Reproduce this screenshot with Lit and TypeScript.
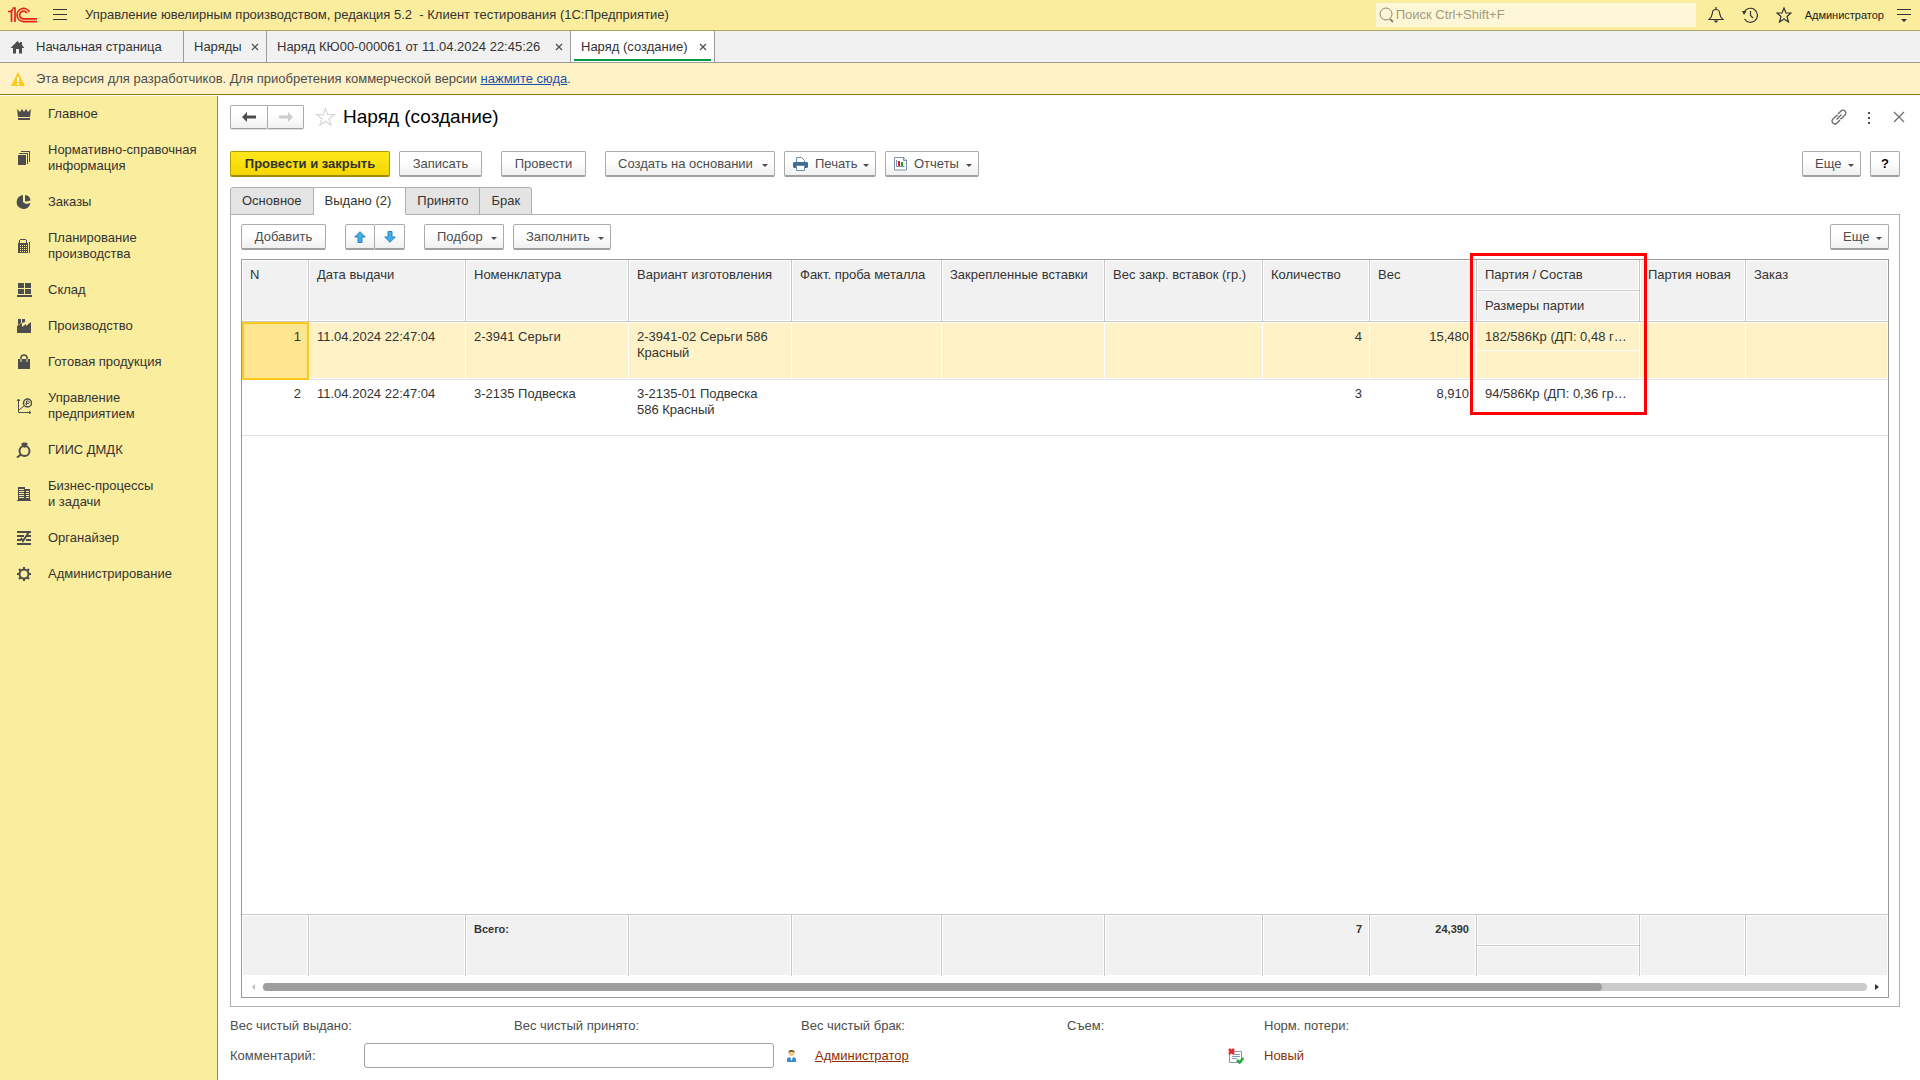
import { LitElement, html, css, svg, nothing } from "lit";
import { customElement } from "lit/decorators.js";
import { classMap } from "lit/directives/class-map.js";

const dark = "#4d4d4d";

/* 16px section icons */
const sectionIcons: Record<string, unknown> = {
  crown: svg`<path fill=${dark} d="M1 3l3 3 2-3 2 3 2-3 2 3 3-3-1 8H2zM2 12h12v2H2z"/>`,
  books: svg`<path shape-rendering="crispEdges" fill=${dark} d="M2 5h8v10H2zM3 3h9v11h-1V4H3zM5 1h9v11h-1V2H5z"/>`,
  pie: svg`<path fill=${dark} d="M7 1v7l3 2 4.500-1A7 7 0 1 1 7 1zM9 1a6 6 0 0 1 5.500 5.500l-4.500 1L9 7z"/>`,
  calc: svg`<g shape-rendering="crispEdges"><path fill=${dark} d="M4 1h6v1h1v3h1v10H2V5h1V2h1zM13 4h1v11h-1z"/><path fill="#fbed9e" d="M4 2h6v3H4zM4 7h1v1H4zM6 7h1v1H6zM8 7h1v1H8zM10 7h1v1h-1zM4 9h1v1H4zM6 9h1v1H6zM8 9h1v1H8zM10 9h1v1h-1zM4 11h1v1H4zM6 11h1v1H6zM8 11h1v1H8zM10 11h1v1h-1zM4 13h1v1H4zM6 13h1v1H6zM8 13h1v1H8zM10 13h1v1h-1z"/></g>`,
  boxes: svg`<path shape-rendering="crispEdges" fill=${dark} d="M2 1h6v5H2zM9 1h6v5H9zM2 7h6v5H2zM9 7h6v5H9zM1 13h15v2H1z"/>`,
  factory: svg`<path fill=${dark} d="M2 1h3v4L2 7zM6 1h3v3L6 5zM1 8l5-3v4l4-3v2l5-4v11H1z"/>`,
  bag: svg`<path fill=${dark} d="M2 5h12v10H2z"/><path fill="none" stroke=${dark} stroke-width="1.500" d="M5 5V4a3 3 0 0 1 6 0v1"/><path fill="none" stroke="#fbed9e" d="M5 5v3M11 5v3"/>`,
  chart: svg`<path fill="none" stroke=${dark} d="M2.500 1v13.500H15M1 3l1.500-2L4 3M13 13l2 1.500-2 1.500M3 12l5-4"/><circle cx="11.500" cy="5" r="4" fill="none" stroke=${dark} stroke-width="1.500"/><path fill="none" stroke=${dark} d="M10.500 7.500V3H12a1 1 0 0 1 0 2.500H9.500"/>`,
  ring: svg`<circle cx="8.500" cy="9" r="5" fill="none" stroke=${dark} stroke-width="2"/><path fill=${dark} d="M5.500 1.500l1.500-1h3l1.500 1V3l-3 3-3-3z"/><path stroke=${dark} stroke-width="2" d="M5 12.500l-4 3"/>`,
  building: svg`<g shape-rendering="crispEdges"><path fill=${dark} d="M2 1h7v2h5v11h1v1H1v-1h1z"/><path fill="#fbed9e" d="M3 3h5v1H3zM3 5h5v1H3zM3 7h5v1H3zM3 9h5v1H3zM3 11h5v1H3zM10 5h3v1h-3zM10 7h3v1h-3zM10 9h3v1h-3zM10 11h3v1h-3z"/></g>`,
  list: svg`<path fill=${dark} d="M1 1h14v2H1zM1 5h7v2H1zM11 5h4v2h-4zM1 9h4v2H1zM10 9h5v2h-5zM1 13h14v2H1z"/><path fill="none" stroke=${dark} stroke-width="2" d="M5 8l2 3 6-9"/>`,
  gear: svg`<circle cx="8" cy="8" r="4.500" fill="none" stroke=${dark} stroke-width="2"/><path stroke=${dark} stroke-width="2" d="M8 1v3M8 12v3M1 8h3M12 8h3M3 3l2 2M11 11l2 2M3 13l2-2M11 5l2-2"/>`,
};

const sections: [string, string[]][] = [
  ["crown", ["Главное"]],
  ["books", ["Нормативно-справочная", "информация"]],
  ["pie", ["Заказы"]],
  ["calc", ["Планирование", "производства"]],
  ["boxes", ["Склад"]],
  ["factory", ["Производство"]],
  ["bag", ["Готовая продукция"]],
  ["chart", ["Управление", "предприятием"]],
  ["ring", ["ГИИС ДМДК"]],
  ["building", ["Бизнес-процессы", "и задачи"]],
  ["list", ["Органайзер"]],
  ["gear", ["Администрирование"]],
];

interface Column {
  title: string;
  width?: number;
  sub?: string;
  num?: boolean;
  total?: string;
}

const columns: Column[] = [
  { title: "N", width: 67, num: true },
  { title: "Дата выдачи", width: 157 },
  { title: "Номенклатура", width: 163, total: "Всего:" },
  { title: "Вариант изготовления", width: 163 },
  { title: "Факт. проба металла", width: 150 },
  { title: "Закрепленные вставки", width: 163 },
  { title: "Вес закр. вставок (гр.)", width: 158 },
  { title: "Количество", width: 107, num: true, total: "7" },
  { title: "Вес", width: 107, num: true, total: "24,390" },
  { title: "Партия / Состав", width: 163, sub: "Размеры партии" },
  { title: "Партия новая", width: 106 },
  { title: "Заказ" },
];

const rows: string[][] = [
  ["1", "11.04.2024 22:47:04", "2-3941 Серьги", "2-3941-02 Серьги 586 Красный", "", "", "", "4", "15,480", "182/586Кр (ДП: 0,48 г…", "", ""],
  ["2", "11.04.2024 22:47:04", "3-2135 Подвеска", "3-2135-01 Подвеска 586 Красный", "", "", "", "3", "8,910", "94/586Кр (ДП: 0,36 гр…", "", ""],
];

const caret = html`<svg class="caret" width="6" height="3" viewBox="0 0 6 3"><path fill="#4d4d4d" d="M0 0h6L3 3z"/></svg>`;
const cross = html`<svg width="8" height="8" viewBox="0 0 8 8"><path stroke="#4d4d4d" stroke-width="1.200" d="M1 1l6 6M7 1L1 7"/></svg>`;

@customElement("app-root")
export class AppRoot extends LitElement {
  static styles = css`
    :host {
      display: flex;
      flex-direction: column;
      min-height: 100vh;
      background: #fff;
      color: #333;
      font: 13px/16px "Liberation Sans", Arial, sans-serif;
    }
    * { box-sizing: border-box; }
    svg { display: block; flex: none; }
    button { font: inherit; color: inherit; margin: 0; cursor: pointer; }
    .plain { border: 0; background: none; padding: 0; display: flex; }

    .top {
      display: flex;
      align-items: center;
      height: 31px;
      padding: 0 9px 0 8px;
      background: #fbed9e;
      border-bottom: 1px solid #aca268;
    }
    .menu { margin: 0 17px 0 16px; }
    .appname { flex: 1; white-space: pre; }
    .search {
      display: flex;
      align-items: center;
      gap: 2px;
      width: 320px;
      height: 24px;
      padding-left: 3px;
      border-radius: 2px;
      background: #fef7d7;
    }
    .search input {
      flex: 1;
      min-width: 0;
      border: 0;
      padding: 0;
      outline: 0;
      background: none;
      font: inherit;
    }
    .search input::placeholder { color: #a09b82; opacity: 1; }
    .topicons { display: flex; gap: 18px; margin: 0 13px 0 12px; }
    .user { font-size: 11px; margin-right: 13px; color: #222; }

    .windows {
      display: flex;
      height: 32px;
      background: #f1f1f1;
      border-bottom: 1px solid #9b9b9b;
    }
    .win {
      display: flex;
      align-items: center;
      justify-content: space-between;
      padding: 0 7px 0 10px;
      border-right: 1px solid #9b9b9b;
    }
    .win.home { width: 184px; justify-content: flex-start; gap: 11px; }
    .win.list { width: 83px; }
    .win.order { width: 304px; }
    .win.on { position: relative; width: 144px; background: #fff; }
    .win.on::after {
      content: "";
      position: absolute;
      left: 3px;
      right: 3px;
      bottom: 1px;
      height: 2px;
      background: #009646;
    }
    .notice {
      display: flex;
      align-items: center;
      gap: 10px;
      height: 32px;
      padding-left: 10px;
      background: #fef2c6;
      border-bottom: 1px solid #987b1c;
      color: #4d4d4d;
    }
    .notice a { color: #1a4fad; }

    .body { flex: 1; display: flex; }
    .side {
      width: 218px;
      flex: none;
      background: #fbed9e;
      border-right: 1px solid #8f8a66;
      margin-top: 1px;
    }
    .section {
      display: flex;
      align-items: center;
      gap: 16px;
      padding: 10px 8px 10px 16px;
      color: inherit;
      text-decoration: none;
    }
    .section span { display: block; white-space: nowrap; }

    .form { flex: 1; min-width: 0; display: flex; flex-direction: column; padding: 10px 20px 12px 12px; }
    .title { display: flex; align-items: center; height: 24px; }
    .title h1 { margin: 0; flex: 1; font-size: 19px; line-height: 24px; font-weight: normal; color: #000; }
    .fav { margin: 0 7px 0 11px; }
    .wintools { display: flex; align-items: center; gap: 19px; margin-right: -7px; }

    .btn {
      display: inline-flex;
      align-items: center;
      justify-content: center;
      height: 26px;
      padding: 0 12px;
      border: 1px solid #ababab;
      border-bottom: 2px solid #a0a0a0;
      border-radius: 2px;
      background: linear-gradient(#fff 40%, #f0f0f0);
      color: #4d4d4d;
      white-space: nowrap;
    }
    .nav .btn { height: 24px; padding: 0; width: 38px; border-bottom-width: 1px; box-shadow: 0 1px 0 #ddd; }
    .nav, .pair { display: flex; }
    .nav .btn + .btn, .pair .btn + .btn { border-left: 0; border-radius: 0 2px 2px 0; }
    .nav .btn + .btn { width: 36px; }
    .pair .btn { width: 30px; padding: 0; }
    .primary {
      border-color: #b39c00;
      border-bottom-color: #a08c00;
      background: linear-gradient(#ffe81a, #f5d600);
      color: #333;
      font-weight: bold;
    }
    .drop { padding: 0 6px 0 12px; justify-content: flex-start; }
    .drop.pic { padding-left: 8px; }
    .caret { margin: 3px 0 0 auto; }
    .btn .ico { margin-right: 7px; }
    .w160 { width: 160px; }
    .w170 { width: 170px; }
    .w94 { width: 94px; }
    .w92 { width: 92px; }
    .w85 { width: 85px; }
    .w83 { width: 83px; }
    .w98 { width: 98px; }
    .w80 { width: 80px; }
    .w59 { width: 59px; }
    .w30 { width: 30px; color: #000; padding: 0; font-weight: bold; }
    .bar { display: flex; align-items: center; gap: 9px; }
    .commands { margin: 22px 0 10px; }
    .gap { margin-left: 10px; }
    .push { margin-left: auto; }

    .tabs { display: flex; position: relative; z-index: 1; }
    .tab {
      height: 28px;
      padding: 0 11px;
      border: 1px solid #b0b0b0;
      border-left-width: 0;
      background: #e4e4e4;
      color: #333;
    }
    .tab:first-child { border-left-width: 1px; border-radius: 3px 0 0 0; }
    .tab:last-child { border-radius: 0 3px 0 0; }
    .tab.on { padding-right: 14px; background: #fff; border-bottom-color: #fff; }
    .panel {
      flex: 1;
      display: flex;
      flex-direction: column;
      margin-top: -1px;
      padding: 9px 10px 8px;
      border: 1px solid #b0b0b0;
    }
    .rowcmds { margin-bottom: 9px; }

    .grid {
      flex: 1;
      display: grid;
      grid-template-rows: 1fr 21px;
      border: 1px solid #9b9b9b;
    }
    table { width: 100%; height: 100%; border-collapse: separate; border-spacing: 0; table-layout: fixed; }
    th, td { padding: 0; text-align: left; vertical-align: top; font-weight: normal; }
    .cell { padding: 6px 7px 0 8px; overflow: hidden; }
    .hrow, .frow { height: 62px; }
    .hrow th, .frow td {
      border-right: 1px solid #c8c8c8;
      background: #f1f1f1;
      box-shadow: inset 0 0 0 1px #fff;
      white-space: nowrap;
    }
    .hrow th { border-bottom: 1px solid #c8c8c8; }
    .frow td { border-top: 1px solid #c8c8c8; font-size: 11px; font-weight: bold; }
    .hrow th:last-child, .frow td:last-child { border-right: 0; }
    .hrow .cell { padding-top: 7px; }
    .hrow .cell.half, .frow .cell.half { height: 31px; border-bottom: 1px solid #c8c8c8; box-shadow: 0 1px 0 #fff, inset 0 -1px 0 #fff; }
    .num .cell { text-align: right; }
    .hrow .num .cell { text-align: left; }
    .drow { height: 56px; }
    .drow td { border-right: 1px solid transparent; border-bottom: 1px solid #e2e2e2; }
    .drow .cell { padding-right: 8px; }
    .drow .num .cell { padding-right: 7px; }
    .drow .wide { padding-right: 16px; }
    .drow .tail { white-space: nowrap; }
    .drow.sel { height: 58px; }
    .sel td {
      border-right-color: #fff;
      background: #fef2c6;
      box-shadow: inset 0 1px 0 #fff, inset 0 -1px 0 #fff;
    }
    .sel .tail { height: 29px; border-bottom: 1px solid #fff; }
    .sel .cell { padding-top: 7px; }
    .sel td:first-child { background: #fee590; outline: 2px solid #fbc91e; outline-offset: -2px; }
    .fill td { border: 0; }
    .marked { position: relative; }
    .mark {
      position: absolute;
      z-index: 2;
      left: -7px;
      right: -8px;
      top: -7px;
      height: 162px;
      border: 3px solid #f00;
      pointer-events: none;
    }
    .scroll { display: flex; align-items: center; gap: 8px; padding: 0 9px 0 10px; height: 21px; }
    .track { flex: 1; height: 8px; border-radius: 4px; background: #cbcbcb; }
    .thumb { height: 8px; width: 83.500%; border-radius: 4px; background: #9e9e9e; }

    .sums { display: grid; grid-template-columns: 284px 287px 266px 197px 1fr; margin-top: 11px; color: #4d4d4d; }
    .meta { display: grid; grid-template-columns: 134px 410px 41px 413px 36px 1fr; align-items: center; margin-top: 9px; color: #4d4d4d; }
    .meta input { height: 25px; width: 100%; border: 1px solid #a0a0a0; border-radius: 3px; padding: 0 6px; font: inherit; background: #fff; }
    .meta a { color: #8c2f00; }
    .meta .who { margin-left: 12px; }
    .meta .state { text-decoration: none; }
  `;

  render() {
    return html`
      <header class="top">
        <svg width="29" height="16" viewBox="0 0 29 16" role="img" aria-label="1С">
          <g fill="none" stroke="#e0261c" stroke-width="1.700">
            <path d="M0 4.500h2.500L5 2.500M3.500 4v11M7 15V1.200H4.500"/>
            <path d="M21.500 5A6.600 6.600 0 1 0 15.500 14.600H29"/>
            <path d="M18.800 6A3.900 3.900 0 1 0 15.500 11.900H29"/>
          </g>
        </svg>
        <button class="plain menu" aria-label="Меню">
          <svg width="15" height="12" viewBox="0 0 15 12"><path shape-rendering="crispEdges" fill="#333" d="M0 0h14v1H0zM0 5h14v1H0zM0 10h14v1H0z"/></svg>
        </button>
        <div class="appname">Управление ювелирным производством, редакция 5.2  - Клиент тестирования (1С:Предприятие)</div>
        <label class="search">
          <svg width="15" height="16" viewBox="0 0 15 16"><circle cx="7" cy="7" r="6" fill="none" stroke="#8a866d"/><path stroke="#8a866d" stroke-width="2" d="M11 12l3 3"/></svg>
          <input type="text" aria-label="Поиск" placeholder="Поиск Ctrl+Shift+F" />
        </label>
        <div class="topicons">
          <button class="plain" aria-label="Уведомления">
            <svg width="16" height="16" viewBox="0 0 16 16"><path fill="none" stroke="#333" stroke-width="1.200" d="M1 12.500h14c-3-2-3-4-3.500-7A3.500 3 0 0 0 4.500 5.500C4 8.500 4 10.500 1 12.500zM8 0v2"/><path fill="#333" d="M5.500 13.500h5L8 16z"/></svg>
          </button>
          <button class="plain" aria-label="История">
            <svg width="16" height="16" viewBox="0 0 16 16"><path fill="none" stroke="#333" stroke-width="1.200" d="M2 5.500A7 7 0 1 1 2.500 12M8.500 4v4.500L11 11"/><path fill="#333" d="M0 4l4.500 0L2 8z"/></svg>
          </button>
          <button class="plain" aria-label="Избранное">
            <svg width="16" height="16" viewBox="0 0 16 16"><path fill="none" stroke="#333" stroke-width="1.200" d="M8 1l2 5h5l-4 3.500 1.500 5.500L8 12l-4.500 3L5 9.500 1 6h5z"/></svg>
          </button>
        </div>
        <div class="user">Администратор</div>
        <button class="plain" aria-label="Сервис">
          <svg width="14" height="13" viewBox="0 0 14 13"><path fill="#333" d="M0 0h14v1H0zM0 5h14v1H0zM4 10h6l-3 3z"/></svg>
        </button>
      </header>

      <nav class="windows">
        <div class="win home">
          <svg width="15" height="14" viewBox="0 0 15 14"><path fill="#4d4d4d" d="M7.500 1L1 7.500V8h2v5.500h3V9h3v4.500h3V8h2v-.500L12 5V2h-2v1.500z"/></svg>
          Начальная страница
        </div>
        <div class="win list">Наряды <button class="plain" aria-label="Закрыть">${cross}</button></div>
        <div class="win order">Наряд КЮ00-000061 от 11.04.2024 22:45:26 <button class="plain" aria-label="Закрыть">${cross}</button></div>
        <div class="win on">Наряд (создание) <button class="plain" aria-label="Закрыть">${cross}</button></div>
      </nav>

      <div class="notice">
        <svg width="16" height="16" viewBox="0 0 16 16"><path fill="#fdca1d" d="M8 1l7 14H1z"/><path fill="#fff" d="M7 6h2v5H7zM7 12h2v2H7z"/></svg>
        <span>Эта версия для разработчиков. Для приобретения коммерческой версии <a href="#">нажмите сюда</a>.</span>
      </div>

      <div class="body">
        <nav class="side">
          ${sections.map(
            ([icon, lines]) => html`<a class="section" href="#">
              <svg width="16" height="16" viewBox="0 0 16 16">${sectionIcons[icon]}</svg>
              <div>${lines.map((l) => html`<span>${l}</span>`)}</div>
            </a>`
          )}
        </nav>

        <main class="form">
          <div class="title">
            <div class="nav">
              <button class="btn" aria-label="Назад"><svg width="14" height="10" viewBox="0 0 14 10"><path fill="#4d4d4d" d="M0 5l5-5v3.500h9v3H5V10z"/></svg></button>
              <button class="btn" aria-label="Вперед"><svg width="14" height="10" viewBox="0 0 14 10"><path fill="#ccc" d="M14 5L9 0v3.500H0v3h9V10z"/></svg></button>
            </div>
            <button class="plain fav" aria-label="В избранное">
              <svg width="21" height="20" viewBox="0 0 21 20"><path fill="none" stroke="#d9d9d9" stroke-width="1.300" d="M10.500 1.500l2.300 6.200h6.500l-5.200 4.100 1.900 6.400-5.500-3.800L5 18.200l1.900-6.400-5.200-4.100h6.500z"/></svg>
            </button>
            <h1>Наряд (создание)</h1>
            <div class="wintools">
              <button class="plain" aria-label="Ссылка">
                <svg width="16" height="16" viewBox="0 0 16 16"><g fill="none" stroke="#6b6b6b" stroke-width="1.300"><path d="M7 5l3-3a2.800 2.800 0 0 1 4 4l-3 3a2.800 2.800 0 0 1-2 .700"/><path d="M9 11l-3 3a2.800 2.800 0 0 1-4-4l3-3a2.800 2.800 0 0 1 2-.700M5.500 10.500l5-5"/></g></svg>
              </button>
              <button class="plain" aria-label="Действия">
                <svg width="6" height="13" viewBox="0 0 6 13"><path fill="#4d4d4d" d="M2 1h2v2H2zM2 6h2v2H2zM2 11h2v2H2z"/></svg>
              </button>
              <button class="plain" aria-label="Закрыть форму">
                <svg width="16" height="16" viewBox="0 0 16 16"><path stroke="#6b6b6b" stroke-width="1.200" d="M3 3l10 10M13 3L3 13"/></svg>
              </button>
            </div>
          </div>

          <div class="bar commands">
            <button class="btn primary w160">Провести и закрыть</button>
            <button class="btn w83">Записать</button>
            <button class="btn gap w85">Провести</button>
            <button class="btn drop gap w170">Создать на основании${caret}</button>
            <button class="btn drop pic w92">
              <svg class="ico" width="15" height="15" viewBox="0 0 15 15"><path fill="#fff" stroke="#6f8aa5" d="M3.500 6V1.500h5l3 3V6"/><path fill="#3f6b96" d="M1 6h13l1 1v4l-1 1h-2v-2H3v2H1l-1-1V7z"/><path fill="#fff" stroke="#6f8aa5" d="M3.500 9.500h8v5h-8z"/></svg>
              Печать${caret}
            </button>
            <button class="btn drop pic w94">
              <svg class="ico" width="13" height="15" viewBox="0 0 13 15"><path fill="#fff" stroke="#7a93ab" d="M.500 1.500h9l3 3v9.500H.500z"/><path fill="none" stroke="#7a93ab" d="M9.500 1v3.500H13M2.500 4v6.500h8"/><path fill="#e02020" d="M4 5h2v5H4z"/><path fill="#21a038" d="M7 6h2v4H7z"/></svg>
              Отчеты${caret}
            </button>
            <button class="btn drop push w59">Еще${caret}</button>
            <button class="btn w30">?</button>
          </div>

          <div class="tabs" role="tablist">
            ${["Основное", "Выдано (2)", "Принято", "Брак"].map(
              (t, i) => html`<button role="tab" class=${classMap({ tab: true, on: i === 1 })}>${t}</button>`
            )}
          </div>

          <section class="panel">
            <div class="bar rowcmds">
              <button class="btn w85">Добавить</button>
              <div class="pair gap">
                <button class="btn" aria-label="Переместить вверх"><svg width="12" height="12" viewBox="0 0 12 12"><path fill="#45aeea" stroke="#2b83b8" d="M6 .700L11.300 6H8v5.500H4V6H.700z"/></svg></button>
                <button class="btn" aria-label="Переместить вниз"><svg width="12" height="12" viewBox="0 0 12 12"><path fill="#45aeea" stroke="#2b83b8" d="M6 11.300L.700 6H4V.500h4V6h3.300z"/></svg></button>
              </div>
              <button class="btn drop gap w80">Подбор${caret}</button>
              <button class="btn drop w98">Заполнить${caret}</button>
              <button class="btn drop push w59">Еще${caret}</button>
            </div>

            <div class="grid">
              <table>
                <colgroup>
                  ${columns.map((c) => html`<col width=${c.width ?? nothing} />`)}
                </colgroup>
                <thead>
                  <tr class="hrow">
                    ${columns.map((c) =>
                      c.sub
                        ? html`<th class="marked">
                            <div class="cell half">${c.title}</div>
                            <div class="cell">${c.sub}</div>
                            <div class="mark"></div>
                          </th>`
                        : html`<th class=${classMap({ num: !!c.num })}><div class="cell">${c.title}</div></th>`
                    )}
                  </tr>
                </thead>
                <tbody>
                  ${rows.map(
                    (r, ri) => html`<tr class=${classMap({ drow: true, sel: ri === 0 })}>
                      ${r.map(
                        (v, i) => html`<td class=${classMap({ num: !!columns[i].num })}>
                          <div class=${classMap({ cell: true, wide: i === 3, tail: !!columns[i].sub })}>${v}</div>
                        </td>`
                      )}
                    </tr>`
                  )}
                  <tr class="fill"><td colspan="12"></td></tr>
                </tbody>
                <tfoot>
                  <tr class="frow">
                    ${columns.map(
                      (c) => html`<td class=${classMap({ num: !!c.num })}>
                        <div class=${classMap({ cell: true, half: !!c.sub })}>${c.total ?? ""}</div>
                      </td>`
                    )}
                  </tr>
                </tfoot>
              </table>
              <div class="scroll">
                <svg width="3" height="6" viewBox="0 0 3 6"><path fill="#bbb" d="M3 0v6L0 3z"/></svg>
                <div class="track"><div class="thumb"></div></div>
                <svg width="4" height="6" viewBox="0 0 4 6"><path fill="#333" d="M0 0v6l4-3z"/></svg>
              </div>
            </div>
          </section>

          <div class="sums">
            <span>Вес чистый выдано:</span><span>Вес чистый принято:</span><span>Вес чистый брак:</span><span>Съем:</span><span>Норм. потери:</span>
          </div>
          <div class="meta">
            <label for="comment">Комментарий:</label>
            <input id="comment" type="text" />
            <svg class="who" width="11" height="13" viewBox="0 0 11 13"><path fill="#3a8fc8" d="M1 13V9.500L3.500 8h4L10 9.500V13z"/><path fill="#fff" d="M4 8h3l-1.500 4z"/><circle cx="5.500" cy="4" r="3" fill="#f3c583"/><path fill="#4b3a2a" d="M2.300 4C2 0 9 0 8.700 4 8 2 3 2 2.300 4z"/></svg>
            <a href="#">Администратор</a>
            <svg width="16" height="16" viewBox="0 0 16 16"><path fill="#fff" stroke="#8299b0" d="M1.500 3.500h12v11h-12z"/><path stroke="#8299b0" d="M6 6.500h6M4 8.500h8M4 10.500h5"/><path stroke="#e02a2a" stroke-width="2.500" d="M1 1l5 5M6 1L1 6"/><path fill="none" stroke="#1fae3f" stroke-width="2.500" d="M9 12l2.500 2.500 4-4.500"/></svg>
            <a class="state" href="#">Новый</a>
          </div>
        </main>
      </div>
    `;
  }
}
